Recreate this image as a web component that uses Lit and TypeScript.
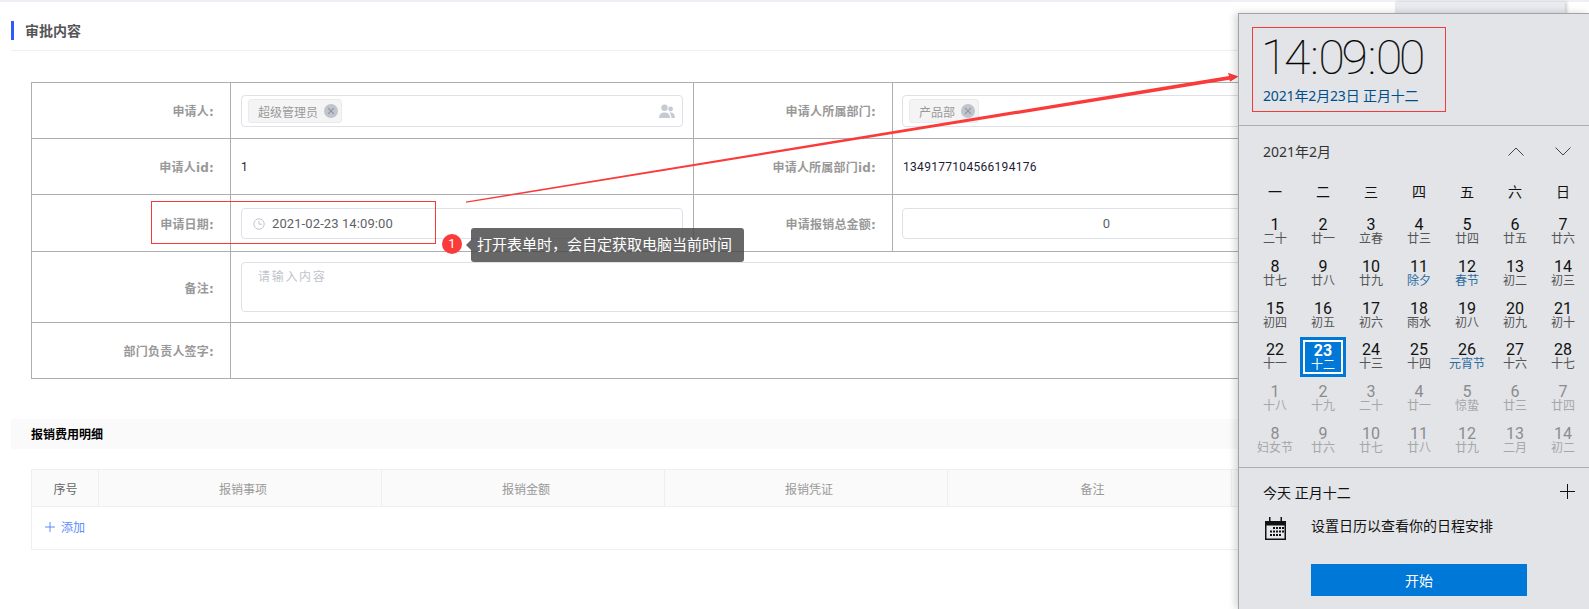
import { LitElement, html, css, svg } from 'lit';
import { customElement } from 'lit/decorators.js';
import { classMap } from 'lit/directives/class-map.js';

type Day = { n: number; l: string; fest?: boolean; dim?: boolean; today?: boolean };

const WEEK = ['一', '二', '三', '四', '五', '六', '日'];

const row = (start: number, lunar: string[], dim = false): Day[] =>
  lunar.map((l, i) => ({ n: start + i, l, dim }));

const DAYS: Day[] = [
  ...row(1, ['二十', '廿一', '立春', '廿三', '廿四', '廿五', '廿六']),
  ...row(8, ['廿七', '廿八', '廿九', '除夕', '春节', '初二', '初三']),
  ...row(15, ['初四', '初五', '初六', '雨水', '初八', '初九', '初十']),
  ...row(22, ['十一', '十二', '十三', '十四', '元宵节', '十六', '十七']),
  ...row(1, ['十八', '十九', '二十', '廿一', '惊蛰', '廿三', '廿四'], true),
  ...row(8, ['妇女节', '廿六', '廿七', '廿八', '廿九', '二月', '初二'], true)
].map(d => ({
  ...d,
  fest: !d.dim && ['除夕', '春节', '元宵节'].includes(d.l),
  today: !d.dim && d.n === 23
}));

const closeIcon = html`<svg class="tag-x" width="14" height="14" viewBox="0 0 13 13">
  <circle cx="6.5" cy="6.5" r="6.5" fill="#c0c4cc"></circle>
  <path d="M3.8 3.8l5.4 5.4M9.2 3.8l-5.4 5.4" stroke="#8f939c" stroke-width="1" fill="none"></path>
</svg>`;

const peopleIcon = html`<svg width="16" height="15" viewBox="0 0 16 15">
  <circle cx="5.5" cy="3.8" r="3.2" fill="#c6cad2"></circle>
  <path d="M0 14c0-3.6 2-5.6 5.5-5.6S11 10.4 11 14z" fill="#c6cad2"></path>
  <circle cx="11.6" cy="5" r="2.4" fill="#c6cad2"></circle>
  <path d="M11.6 8.4c2.8 0 4.4 1.8 4.4 5.6h-3.6c0-2.2-.6-3.9-2-5.2.4-.2.8-.4 1.2-.4z" fill="#c6cad2"></path>
</svg>`;

const clockIcon = html`<svg width="12" height="12" viewBox="0 0 12 12" fill="none" stroke="#c0c4cc">
  <circle cx="6" cy="6" r="5.2"></circle>
  <path d="M6 2.8V6.2H8.8"></path>
</svg>`;

const calendarIcon = html`<svg width="23" height="25" viewBox="0 0 23 25">
  <path d="M1 5h4V1h1.5v4h10V1H18v4h4v19H1z" fill="#111"></path>
  <rect x="2.5" y="9.5" width="18" height="13" fill="#e6e7ea"></rect>
  ${[
    [9, 11], [12, 11], [15, 11], [18, 11],
    [6, 14.5], [9, 14.5], [12, 14.5], [15, 14.5], [18, 14.5],
    [6, 18], [9, 18], [12, 18], [15, 18]
  ].map(([x, y]) => svg`<rect x=${x} y=${y} width="2" height="2" fill="#111"></rect>`)}
</svg>`;

@customElement('app-root')
export default class AppRoot extends LitElement {
  static styles = css`
    :host {
      display: block;
      position: relative;
      width: 1589px;
      height: 609px;
      overflow: hidden;
      background: #fff;
      font-family: 'Roboto', 'Noto Sans CJK SC', sans-serif;
      font-size: 12px;
    }

    .top-line {
      height: 2px;
      background: #eef0f5;
    }

    .section-head {
      display: flex;
      align-items: center;
      gap: 11px;
      height: 40px;
      padding-top: 8px;
      margin-left: 11px;
      border-bottom: 1px solid #eeeff4;
      box-sizing: content-box;
      color: #555;
      font-size: 14px;
      font-weight: 700;
    }

    .section-head i {
      width: 3px;
      height: 19px;
      background: #2f5bff;
    }

    .form {
      display: grid;
      grid-template-columns: 199px 463px 199px 429px;
      grid-template-rows: 56px 56px 57px 71px 56px;
      width: 1290px;
      margin: 31px 0 0 31px;
      border-top: 1px solid #aeaeae;
      border-left: 1px solid #aeaeae;
    }

    .cell {
      display: flex;
      align-items: center;
      padding: 0 10px;
      box-sizing: border-box;
      min-width: 0;
      border-right: 1px solid #aeaeae;
      border-bottom: 1px solid #aeaeae;
      color: #1c1c34;
      letter-spacing: 0.3px;
    }

    .cell.last {
      padding-left: 9px;
    }

    .label {
      justify-content: flex-end;
      padding: 0 16px 0 0;
      color: #999;
      font-family: 'DejaVu Sans', 'Noto Sans CJK SC', sans-serif;
      font-weight: 700;
      letter-spacing: 0.2px;
    }

    .span3 {
      grid-column: span 3;
    }

    .box {
      display: flex;
      align-items: center;
      flex: 1;
      height: 32px;
      box-sizing: border-box;
      border: 1px solid #dfe0e8;
      border-radius: 4px;
      background: #fff;
    }

    .user-box {
      justify-content: space-between;
      margin-top: 1px;
      padding: 0 7px 0 6px;
    }

    .tag {
      display: flex;
      align-items: center;
      gap: 6px;
      height: 24px;
      padding: 0 3px 0 9px;
      box-sizing: border-box;
      border: 1px solid #ebebed;
      border-radius: 3px;
      background: #f4f4f5;
      color: #999;
      letter-spacing: 0;
    }

    .date-box {
      gap: 7px;
      height: 31px;
      margin-top: 1px;
      padding-left: 11px;
      color: #606266;
      font-size: 13px;
      letter-spacing: 0.1px;
    }

    .num-box {
      justify-content: center;
      height: 31px;
      color: #606266;
      font-size: 13px;
    }

    .text-box {
      align-items: flex-start;
      height: 50px;
      padding: 4px 16px;
      color: #c0c4cc;
      letter-spacing: 1.7px;
    }

    .detail-head {
      display: flex;
      align-items: center;
      width: 1329px;
      height: 30px;
      margin: 40px 0 0 11px;
      padding: 0 0 1px 20px;
      box-sizing: border-box;
      background: #fafafa;
      color: #000;
      font-weight: 700;
    }

    .detail {
      display: grid;
      grid-template-columns: 67px 283px 283px 283px 284px 90px;
      grid-template-rows: 37px 42px;
      width: 1290px;
      margin: 20px 0 0 31px;
      border: 1px solid #eeeff3;
      border-right: 0;
    }

    .th {
      display: flex;
      align-items: center;
      justify-content: center;
      padding-left: 6px;
      border-right: 1px solid #eeeff3;
      border-bottom: 1px solid #eeeff3;
      background: #fafafa;
      color: #999;
    }

    .th.first {
      padding-left: 1px;
      color: #666;
    }

    .add {
      display: flex;
      align-items: center;
      gap: 6px;
      grid-column: 1 / -1;
      padding: 0 0 3px 13px;
      color: #5b8cff;
    }

    /* annotations drawn on top of the form */
    .mark {
      position: absolute;
      box-sizing: border-box;
      border: 1px solid #f23c3c;
    }

    .mark.date {
      left: 151px;
      top: 201px;
      width: 285px;
      height: 43px;
    }

    .arrow {
      position: absolute;
      left: 0;
      top: 0;
    }

    .badge {
      position: absolute;
      left: 442px;
      top: 234px;
      width: 20px;
      height: 20px;
      border-radius: 50%;
      background: #fb3a3a;
      color: #fff;
      font-size: 13px;
      line-height: 20px;
      text-align: center;
    }

    .tip {
      position: absolute;
      left: 471px;
      top: 228px;
      width: 273px;
      height: 34px;
      padding-left: 6px;
      box-sizing: border-box;
      border-radius: 3px;
      background: rgba(70, 70, 70, 0.82);
      color: #fff;
      font-size: 15px;
      line-height: 34px;
      white-space: nowrap;
    }

    .tip::before {
      content: '';
      position: absolute;
      left: -5px;
      top: 12px;
      border-style: solid;
      border-width: 5px 5px 5px 0;
      border-color: transparent rgba(70, 70, 70, 0.82) transparent transparent;
    }

    /* windows clock flyout */
    .strip {
      position: absolute;
      left: 1395px;
      top: 2px;
      width: 170px;
      height: 12px;
      background: linear-gradient(#e9ecf0, #e3e6ea);
      box-shadow: 2px 0 3px rgba(0, 0, 0, 0.2);
    }

    .flyout {
      position: absolute;
      left: 1238px;
      top: 13px;
      width: 351px;
      height: 596px;
      box-sizing: border-box;
      border: 1px solid #a2a3a5;
      border-width: 1px 0 0 1px;
      background: #e2e4e7;
      box-shadow: -3px 0 7px rgba(0, 0, 0, 0.16);
      font-family: 'Noto Sans', 'Noto Sans CJK SC', sans-serif;
      color: #111;
    }

    .clock {
      position: relative;
      height: 112px;
      padding: 16px 0 0 22px;
      box-sizing: border-box;
      border-bottom: 1px solid #acaeb0;
    }

    .clock .mark {
      left: 13px;
      top: 13px;
      width: 194px;
      height: 85px;
    }

    .time {
      font-family: 'Roboto', sans-serif;
      font-size: 48px;
      font-weight: 100;
      line-height: 56px;
      letter-spacing: -3.2px;
      color: #000;
      -webkit-text-stroke: 0.2px #111;
    }

    .time i {
      margin: 0 3px;
      font-style: normal;
    }

    .long-date {
      padding-left: 2px;
      color: #004e8c;
      font-size: 14px;
      line-height: 20px;
      letter-spacing: -0.15px;
    }

    .month {
      display: flex;
      align-items: center;
      height: 51px;
      padding: 0 18.5px 0 24px;
      color: #333;
      font-size: 14px;
    }

    .month span {
      flex: 1;
      margin-bottom: 2px;
    }

    .month svg {
      margin-left: 31px;
    }

    .cal {
      display: grid;
      grid-template-columns: repeat(7, 48px);
      grid-auto-rows: 41.8px;
      margin-left: 12px;
      padding-bottom: 5px;
      border: 0;
    }

    .wk {
      height: 34px;
      font-size: 14px;
      line-height: 29px;
      text-align: center;
    }

    .week {
      display: grid;
      grid-template-columns: repeat(7, 48px);
      margin-left: 12px;
    }

    .day {
      display: flex;
      flex-direction: column;
      align-items: center;
      justify-content: center;
      height: 40px;
      box-sizing: border-box;
      color: #111;
      font-family: 'Roboto', 'Noto Sans CJK SC', sans-serif;
      font-size: 16px;
      line-height: 17px;
    }

    .day small {
      color: #555;
      font-size: 12px;
      line-height: 13px;
    }

    .day.fest small {
      color: #2c6ba0;
    }

    .day.dim {
      color: #8b8c8e;
    }

    .day.dim small {
      color: #a6a7a9;
    }

    .day.today {
      width: 46px;
      margin: 1px 0 0 1px;
      border: 3px solid #0078d7;
      box-shadow: inset 0 0 0 2px #fff;
      background: #0078d7;
      color: #fff;
      font-weight: 700;
    }

    .day.today small {
      color: #fff;
      font-weight: 400;
    }

    .agenda {
      border-top: 1px solid #acaeb0;
    }

    .agenda-head {
      display: flex;
      align-items: center;
      justify-content: space-between;
      height: 48px;
      padding: 0 14px 0 24px;
      font-size: 14px;
    }

    .agenda-row {
      display: flex;
      align-items: center;
      gap: 24px;
      height: 26px;
      margin-left: 25px;
      font-size: 14px;
    }

    .agenda-row span {
      margin-bottom: 8px;
    }

    .start {
      display: flex;
      align-items: center;
      justify-content: center;
      width: 216px;
      height: 32px;
      margin: 22px 0 0 72px;
      background: #0078d7;
      color: #fff;
      font-size: 14px;
    }
  `;

  private renderDay(d: Day) {
    return html`<div class=${classMap({ day: true, dim: !!d.dim, fest: !!d.fest, today: !!d.today })}>
      <span>${d.n}</span><small>${d.l}</small>
    </div>`;
  }

  render() {
    return html`
      <div class="top-line"></div>
      <div class="section-head"><i></i>审批内容</div>

      <div class="form">
        <div class="cell label">申请人:</div>
        <div class="cell">
          <div class="box user-box">
            <div class="tag">超级管理员 ${closeIcon}</div>
            ${peopleIcon}
          </div>
        </div>
        <div class="cell label">申请人所属部门:</div>
        <div class="cell last">
          <div class="box user-box">
            <div class="tag">产品部 ${closeIcon}</div>
          </div>
        </div>

        <div class="cell label">申请人id:</div>
        <div class="cell">1</div>
        <div class="cell label">申请人所属部门id:</div>
        <div class="cell">1349177104566194176</div>

        <div class="cell label">申请日期:</div>
        <div class="cell">
          <div class="box date-box">${clockIcon}<span>2021-02-23 14:09:00</span></div>
        </div>
        <div class="cell label">申请报销总金额:</div>
        <div class="cell last"><div class="box num-box">0</div></div>

        <div class="cell label">备注:</div>
        <div class="cell span3"><div class="box text-box">请输入内容</div></div>

        <div class="cell label">部门负责人签字:</div>
        <div class="cell span3"></div>
      </div>

      <div class="detail-head">报销费用明细</div>
      <div class="detail">
        <div class="th first">序号</div>
        <div class="th">报销事项</div>
        <div class="th">报销金额</div>
        <div class="th">报销凭证</div>
        <div class="th">备注</div>
        <div class="th"></div>
        <div class="add">
          <svg width="10" height="10" viewBox="0 0 10 10" stroke="#5b8cff" fill="none"><path d="M5 0v10M0 5h10"></path></svg>
          添加
        </div>
      </div>

      <div class="mark date"></div>
      <svg class="arrow" width="1589" height="609" viewBox="0 0 1589 609">
        <polygon points="466,201.4 1229,75.9 1228,72.7 1238.5,76.6 1230,81.7 1229.4,79.8 466,202.8" fill="#fb3a3a"></polygon>
      </svg>
      <div class="badge">1</div>
      <div class="tip">打开表单时，会自定获取电脑当前时间</div>

      <div class="strip"></div>
      <div class="flyout">
        <div class="clock">
          <div class="mark"></div>
          <div class="time">14<i>:</i>09<i>:</i>00</div>
          <div class="long-date">2021年2月23日 正月十二</div>
        </div>
        <div class="month">
          <span>2021年2月</span>
          <svg width="16" height="9" viewBox="0 0 16 9" fill="none" stroke="#444"><path d="M0.5 8.5L8 1l7.5 7.5"></path></svg>
          <svg width="16" height="9" viewBox="0 0 16 9" fill="none" stroke="#444"><path d="M0.5 0.5L8 8l7.5-7.5"></path></svg>
        </div>
        <div class="week">${WEEK.map(w => html`<div class="wk">${w}</div>`)}</div>
        <div class="cal">${DAYS.map(d => this.renderDay(d))}</div>
        <div class="agenda">
          <div class="agenda-head">
            <span>今天 正月十二</span>
            <svg width="15" height="15" viewBox="0 0 15 15" stroke="#111" fill="none"><path d="M7.5 0v15M0 7.5h15"></path></svg>
          </div>
          <div class="agenda-row">${calendarIcon}<span>设置日历以查看你的日程安排</span></div>
          <div class="start">开始</div>
        </div>
      </div>
    `;
  }
}
